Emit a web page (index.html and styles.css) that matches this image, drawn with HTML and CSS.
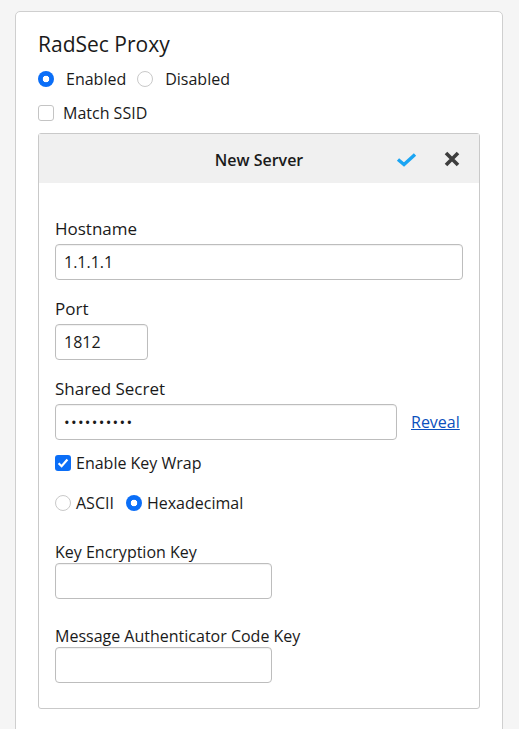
FILE: index.html
```html
<!DOCTYPE html>
<html>
<head>
<meta charset="utf-8">
<link rel="stylesheet" href="styles.css">
</head>
<body>
<div class="card">
  <h1 class="title">RadSec Proxy</h1>
  <div class="row radios-top">
    <label class="opt opt-wide"><input type="radio" name="state" checked><span>Enabled</span></label>
    <label class="opt opt-wide"><input type="radio" name="state"><span>Disabled</span></label>
  </div>
  <div class="row check-top">
    <label class="opt opt-mid"><input type="checkbox"><span>Match SSID</span></label>
  </div>
  <div class="panel">
    <div class="panel-head">
      <span></span>
      <span class="panel-title">New Server</span>
      <span class="actions">
        <svg class="ic-check" width="21" height="15" viewBox="0 0 21 15"><path d="M2 7.5 L8 12.5 L19 2.5" fill="none" stroke="#1ba5f3" stroke-width="3.4" stroke-linecap="butt" stroke-linejoin="miter"/></svg>
        <svg class="ic-x" width="16" height="16" viewBox="0 0 16 16"><path d="M2 2 L14 14 M14 2 L2 14" fill="none" stroke="#3e3e3e" stroke-width="3.6"/></svg>
      </span>
    </div>
    <div class="panel-body">
      <label class="lbl lbl-first">Hostname</label>
      <input class="field field-host" type="text" value="1.1.1.1">
      <label class="lbl">Port</label>
      <input class="field field-port" type="text" value="1812">
      <label class="lbl">Shared Secret</label>
      <div class="secret-row">
        <input class="field field-secret" type="password" value="abcdefghij">
        <a class="reveal" href="#">Reveal</a>
      </div>
      <div class="row keywrap">
        <label class="opt opt-tight"><input type="checkbox" checked><span>Enable Key Wrap</span></label>
      </div>
      <div class="row encoding">
        <label class="opt opt-tight"><input type="radio" name="enc"><span>ASCII</span></label>
        <label class="opt opt-tight"><input type="radio" name="enc" checked><span>Hexadecimal</span></label>
      </div>
      <label class="lbl lbl-key">Key Encryption Key</label>
      <input class="field field-key" type="text">
      <label class="lbl lbl-key lbl-mack">Message Authenticator Code Key</label>
      <input class="field field-key" type="text">
    </div>
  </div>
</div>
</body>
</html>
```

FILE: styles.css
```css
* { box-sizing: border-box; }
html, body { margin: 0; padding: 0; }
body {
  background: #f5f5f5;
  font-family: "Open Sans", "Noto Sans", sans-serif;
  color: #1a1a1a;
  padding: 11px 16px 0 15px;
  height: 729px;
  overflow: hidden;
}
.card {
  background: #fff;
  border: 1px solid #cfcfcf;
  border-radius: 5px;
  padding: 20px 22px 40px 22px;
  min-height: 760px;
}
.title {
  margin: 0;
  font-size: 21px;
  font-weight: 400;
  line-height: 24px;
  color: #1a1a1a;
}
.row { display: flex; align-items: center; }
.radios-top { margin-top: 13px; height: 20px; gap: 11px; }
.check-top { margin-top: 14px; height: 20px; }
.opt { display: flex; align-items: center; font-size: 16px; line-height: 20px; cursor: pointer; }
.opt-wide { gap: 12px; }
.opt-mid { gap: 9px; }
.opt-tight { gap: 5px; font-size: 16px; }

input[type="radio"] {
  appearance: none;
  -webkit-appearance: none;
  margin: 0;
  width: 16px;
  height: 16px;
  border-radius: 50%;
  border: 1px solid #c9c9c9;
  background: #fff;
  flex: none;
}
input[type="radio"]:checked {
  border: none;
  background: radial-gradient(circle, #fff 0 3px, #0b6ef7 3.6px);
}
input[type="checkbox"] {
  appearance: none;
  -webkit-appearance: none;
  margin: 0;
  width: 16px;
  height: 16px;
  border-radius: 3px;
  border: 1px solid #c4c4c4;
  background: #fff;
  flex: none;
}
input[type="checkbox"]:checked {
  border: none;
  background: #0b6ef7 url("data:image/svg+xml;utf8,<svg xmlns='http://www.w3.org/2000/svg' viewBox='0 0 16 16'><path d='M3.6 8.3 L6.6 11.2 L12.4 4.6' fill='none' stroke='white' stroke-width='2.2'/></svg>") center/16px 16px no-repeat;
}

.panel {
  margin-top: 10px;
  width: 442px;
  border: 1px solid #c9c9c9;
  border-radius: 3px;
}
.panel-head {
  height: 49px;
  background: #f0f0f0;
  display: grid;
  grid-template-columns: 1fr auto 1fr;
  align-items: center;
  padding-right: 19px;
  padding-left: 19px;
}
.panel-title {
  font-size: 16px;
  font-weight: 600;
  color: #1a1a1a;
  padding-top: 2px;
}
.actions {
  justify-self: end;
  display: flex;
  align-items: center;
  gap: 27px;
}
.ic-check { display: block; margin-top: 1px; }
.ic-x { display: block; }

.panel-body {
  padding: 35px 16px 25px 16px;
}
.lbl {
  display: block;
  font-size: 17px;
  line-height: 22px;
  margin: 18px 0 4px;
  color: #1a1a1a;
}
.lbl-first { margin-top: 0; }
.lbl-key { margin: 28px 0 0; font-size: 16px; }
.lbl-mack { margin-top: 26px; }
.field {
  display: block;
  height: 36px;
  border: 1px solid #bdbdbd;
  border-radius: 4px;
  padding: 0 8px;
  font-family: "Open Sans", "Noto Sans", sans-serif;
  font-size: 16px;
  color: #1a1a1a;
  background: #fff;
  box-shadow: inset 0 1px 1px rgba(0,0,0,0.06);
  outline: none;
}
.field-host { width: 408px; }
.field-port { width: 93px; }
.field-secret { width: 342px; font-size: 15px; letter-spacing: 1.3px; }
.field-key { width: 217px; }
.secret-row { display: flex; align-items: center; gap: 14px; }
.reveal {
  color: #0b4fbd;
  font-size: 16px;
  text-decoration: underline;
}
.keywrap { margin-top: 13px; height: 20px; }
.encoding { margin-top: 20px; height: 20px; gap: 12px; }
```
